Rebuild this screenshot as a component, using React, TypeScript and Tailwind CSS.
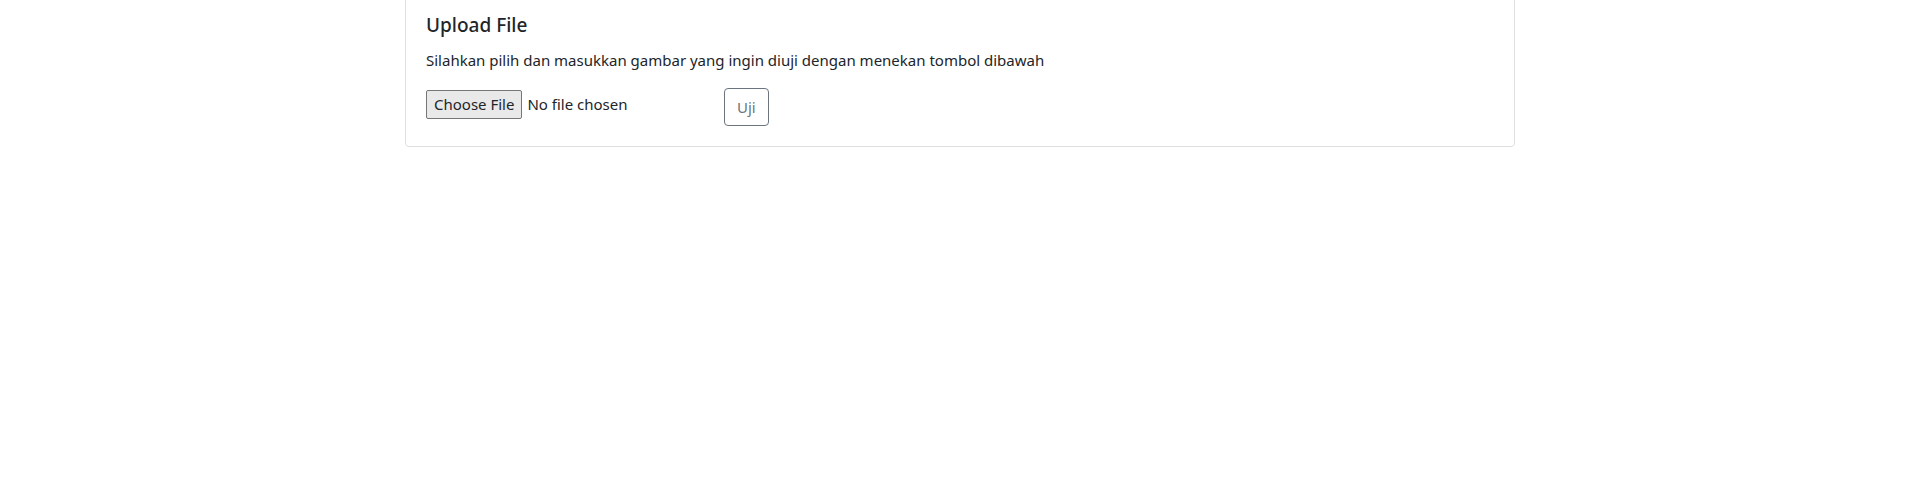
export default function App() {
  return (
    <div
      className="min-h-screen bg-white text-[#212529]"
      style={{ fontFamily: '"Noto Sans", "Open Sans", sans-serif' }}
    >
      <div className="mx-auto w-[1140px] px-[15px]">
        <div className="-mt-[9px] rounded border border-[#dfdfdf] bg-white">
          <div className="p-5">
            <h5 className="mb-3 pt-[2px] text-[19px] leading-[22px] font-medium">Upload File</h5>
            <p className="mb-4 text-[15px] leading-[24px]">
              Silahkan pilih dan masukkan gambar yang ingin diuji dengan menekan tombol dibawah
            </p>
            <div className="flex items-start">
              <div className="flex w-[298px] items-center pt-[2px]">
                <span className="flex h-[29px] items-center rounded-[2px] border border-[#767676] bg-[#e9e9e9] px-[7px] text-[15px] text-[#212529]">
                  Choose File
                </span>
                <span className="ml-[5px] text-[15px]">No file chosen</span>
              </div>
              <button className="h-[38px] rounded border border-[#6c757d] px-3 text-[15px] leading-[24px] text-[#6c757d]">
                Uji
              </button>
            </div>
          </div>
        </div>
      </div>
    </div>
  )
}
